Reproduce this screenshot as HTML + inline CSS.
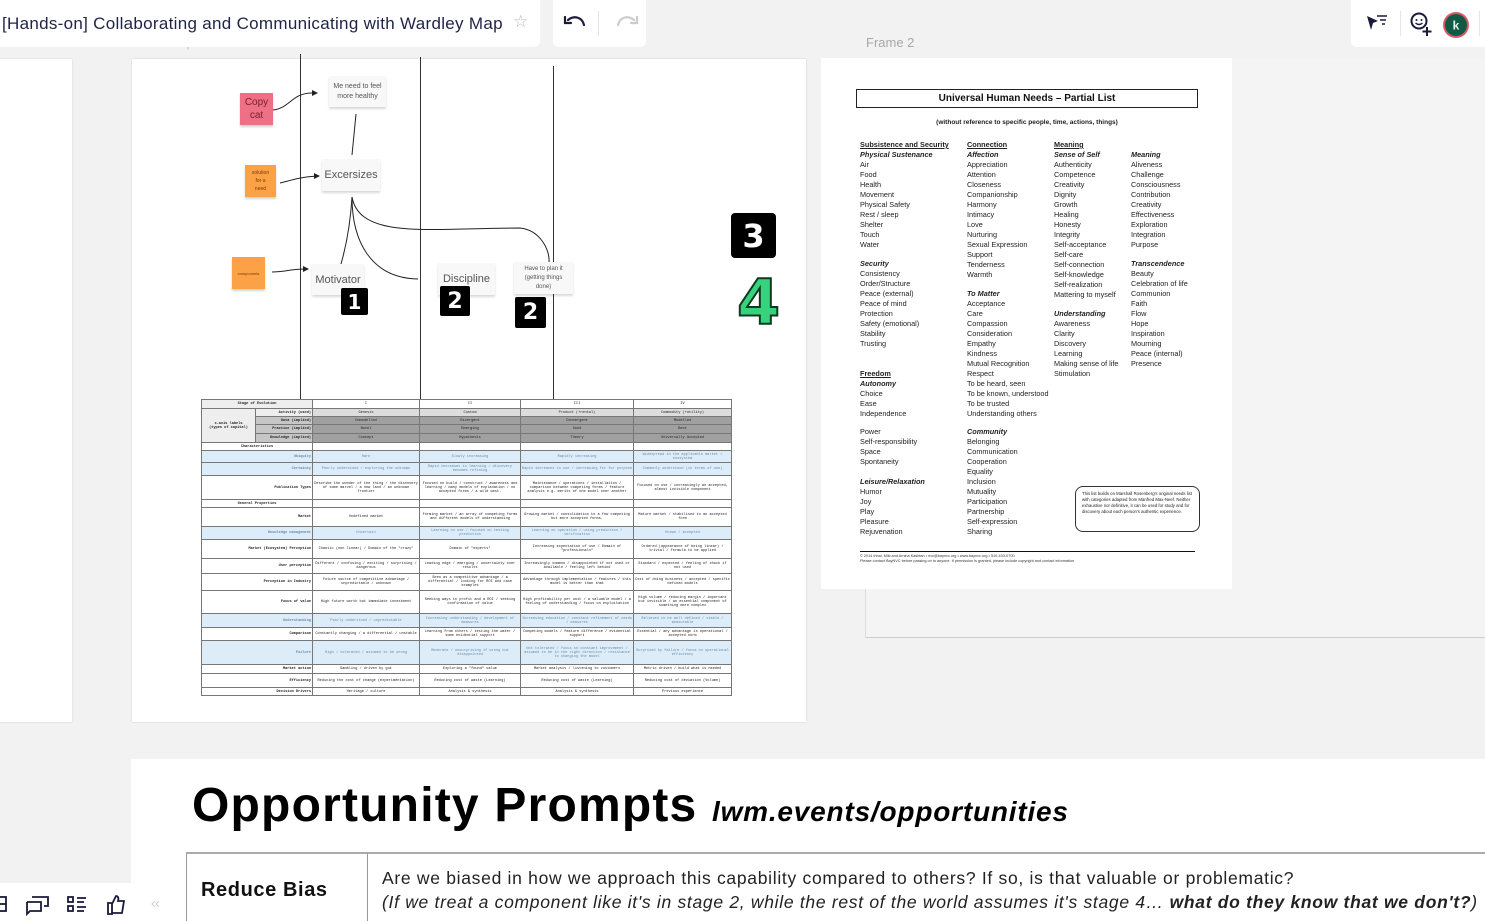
<!DOCTYPE html>
<html><head><meta charset="utf-8"><style>
*{margin:0;padding:0;box-sizing:border-box}
body{width:1485px;height:921px;overflow:hidden;background:#f2f2f2;font-family:"Liberation Sans",sans-serif;position:relative}
.abs{position:absolute}
.w{background:#fff}
.sticky{position:absolute;font-family:"Liberation Sans",sans-serif;text-align:center;display:flex;align-items:center;justify-content:center;box-shadow:0 2px 2px rgba(0,0,0,.18)}
.card{position:absolute;background:#f8f8f8;color:#555;text-align:center;display:flex;align-items:center;justify-content:center;box-shadow:0 2px 2px rgba(0,0,0,.15)}
.num{position:absolute;background:#000;color:#fff;font-weight:bold;font-family:"DejaVu Sans",sans-serif;display:flex;align-items:center;justify-content:center;border-radius:2px}
table.t{position:absolute;left:201px;top:399px;width:530px;border-collapse:collapse;font-family:"Liberation Mono",monospace;font-size:3.6px;line-height:4px;color:#222;table-layout:fixed}
table.t td{border:0.5px solid #777;text-align:center;overflow:hidden;padding:0 1px}
table.t td.r{text-align:right;font-weight:bold}
.b td{background:#dcedf9;color:#6a8aa8}
.b td.r{font-weight:normal}
.g1{background:#ddd}.g2{background:#a0a0a0}.gl{background:#eee}.gm{background:#c6c6c6}
.hn{font-size:7.3px;color:#222;line-height:10px}
.hn div{position:absolute;white-space:nowrap}
</style></head><body>

<div class="abs w" style="left:0;top:59px;width:72px;height:663px;box-shadow:0 0 2px rgba(0,0,0,.12)"></div>
<div class="abs" style="left:133px;top:38px;font-size:11px;color:#bbb">Fitness Map</div>
<div class="abs w" style="left:132px;top:59px;width:674px;height:663px;box-shadow:0 0 2px rgba(0,0,0,.15)"></div>

<div class="abs" style="left:300px;top:54px;width:1px;height:345px;background:#333"></div>
<div class="abs" style="left:420px;top:57px;width:1px;height:342px;background:#333"></div>
<div class="abs" style="left:553px;top:66px;width:1px;height:333px;background:#333"></div>

<svg class="abs" style="left:0;top:0" width="806" height="400">
<g fill="none" stroke="#222" stroke-width="1">
<path d="M273 110 C290 108 292 93 312 93"/>
<path d="M280 183 C292 180 300 177 318 176"/>
<path d="M272 272 C285 272 290 269 306 269"/>
<path d="M356 114 L352 155"/>
<path d="M352 197 C350 230 345 250 341 264"/>
<path d="M352 197 C352 240 370 278 418 279"/>
<path d="M352 197 C360 240 430 228 520 228 C540 230 550 250 549 262"/>
</g>
<g fill="#222"><path d="M312 90 L318 93 L312 96Z"/><path d="M314 173 L320 176 L314 179Z"/><path d="M303 266 L309 269 L303 272Z"/></g>
</svg>

<div class="sticky" style="left:240px;top:93px;width:33px;height:32px;background:#ef6f84;color:#7a2030;font-size:10px;line-height:13px">Copy<br>cat</div>
<div class="sticky" style="left:245px;top:165px;width:31px;height:32px;background:#fba146;color:#7a3a00;font-size:5px;line-height:8px">solution<br>for a<br>need</div>
<div class="sticky" style="left:232px;top:257px;width:33px;height:32px;background:#fba146;color:#7a3a00;font-size:4px">components</div>

<div class="card" style="left:329px;top:76px;width:57px;height:31px;font-size:7px;line-height:10px">Me need to feel<br>more healthy</div>
<div class="card" style="left:322px;top:159px;width:58px;height:32px;font-size:11px">Excersizes</div>
<div class="card" style="left:312px;top:264px;width:52px;height:31px;font-size:11px">Motivator</div>
<div class="card" style="left:438px;top:263px;width:57px;height:32px;font-size:11px">Discipline</div>
<div class="card" style="left:514px;top:262px;width:59px;height:32px;font-size:6px;line-height:9px">Have to plan it<br>(getting things<br>done)</div>

<div class="num" style="left:341px;top:288px;width:27px;height:27px;font-size:20px">1</div>
<div class="num" style="left:440px;top:286px;width:30px;height:30px;font-size:22px">2</div>
<div class="num" style="left:515px;top:297px;width:31px;height:31px;font-size:22px">2</div>
<div class="num" style="left:731px;top:213px;width:45px;height:45px;font-size:32px;border-radius:4px">3</div>
<div class="abs" style="left:737px;top:268px;font-size:62px;font-weight:bold;color:#37d27d;-webkit-text-stroke:2px #0c3a20;font-family:'DejaVu Sans',sans-serif;line-height:70px">4</div>

<table class="t">
<colgroup><col style="width:54px"><col style="width:57px"><col style="width:107px"><col style="width:101px"><col style="width:113px"><col style="width:98px"></colgroup>
<tr style="height:9px"><td colspan="2" class="gl" style="font-weight:bold">Stage of Evolution</td><td>I</td><td>II</td><td>III</td><td>IV</td></tr>
<tr style="height:8px"><td rowspan="4" class="gl" style="font-weight:bold">x-axis labels<br>(types of capital)</td><td class="r gl">Activity (used)</td><td class="g1">Genesis</td><td class="g1">Custom</td><td class="g1">Product (+rental)</td><td class="g1">Commodity (+utility)</td></tr>
<tr style="height:8px"><td class="r gm">Data (implied)</td><td class="g2">Unmodelled</td><td class="g2">Divergent</td><td class="g2">Convergent</td><td class="g2">Modelled</td></tr>
<tr style="height:9px"><td class="r gm">Practice (implied)</td><td class="g2">Novel</td><td class="g2">Emerging</td><td class="g2">Good</td><td class="g2">Best</td></tr>
<tr style="height:9px"><td class="r gm">Knowledge (implied)</td><td class="g2">Concept</td><td class="g2">Hypothesis</td><td class="g2">Theory</td><td class="g2">Universally Accepted</td></tr>
<tr style="height:8px"><td colspan="2" style="font-weight:bold">Characteristics</td><td></td><td></td><td></td><td></td></tr>
<tr class="b" style="height:12px"><td colspan="2" class="r">Ubiquity</td><td>Rare</td><td>Slowly increasing</td><td>Rapidly increasing</td><td>Widespread in the applicable market / ecosystem</td></tr>
<tr class="b" style="height:13px"><td colspan="2" class="r">Certainty</td><td>Poorly understood / exploring the unknown</td><td>Rapid increases in learning / discovery becomes refining</td><td>Rapid increases in use / increasing fit for purpose</td><td>Commonly understood (in terms of use)</td></tr>
<tr style="height:24px"><td colspan="2" class="r">Publication Types</td><td>Describe the wonder of the thing / the discovery of some marvel / a new land / an unknown frontier</td><td>Focused on build / construct / awareness and learning / many models of explanation / no accepted forms / a wild west.</td><td>Maintenance / operations / installation / comparison between competing forms / feature analysis e.g. merits of one model over another</td><td>Focused on use / increasingly an accepted, almost invisible component</td></tr>
<tr style="height:8px"><td colspan="2" style="font-weight:bold">General Properties</td><td></td><td></td><td></td><td></td></tr>
<tr style="height:19px"><td colspan="2" class="r">Market</td><td>Undefined market</td><td>Forming market / an array of competing forms and different models of understanding</td><td>Growing market / consolidation to a few competing but more accepted forms.</td><td>Mature market / stabilised to an accepted form</td></tr>
<tr class="b" style="height:13px"><td colspan="2" class="r">Knowledge management</td><td>Uncertain</td><td>Learning on use / focused on testing prediction</td><td>Learning on operation / using prediction / verification</td><td>Known / accepted</td></tr>
<tr style="height:19px"><td colspan="2" class="r">Market (Ecosystem) Perception</td><td>Chaotic (non linear) / Domain of the "crazy"</td><td>Domain of "experts"</td><td>Increasing expectation of use / Domain of "professionals"</td><td>Ordered (appearance of being linear) / trivial / formula to be applied</td></tr>
<tr style="height:15px"><td colspan="2" class="r">User perception</td><td>Different / confusing / exciting / surprising / dangerous</td><td>Leading edge / emerging / uncertainty over results</td><td>Increasingly common / disappointed if not used or available / feeling left behind</td><td>Standard / expected / feeling of shock if not used</td></tr>
<tr style="height:17px"><td colspan="2" class="r">Perception in Industry</td><td>Future source of competitive advantage / unpredictable / unknown</td><td>Seen as a competitive advantage / a differential / looking for ROI and case examples</td><td>Advantage through implementation / features / this model is better than that</td><td>Cost of doing business / accepted / specific defined models</td></tr>
<tr style="height:23px"><td colspan="2" class="r">Focus of value</td><td>High future worth but immediate investment</td><td>Seeking ways to profit and a ROI / seeking confirmation of value</td><td>High profitability per unit / a valuable model / a feeling of understanding / focus on exploitation</td><td>High volume / reducing margin / important but invisible / an essential component of something more complex</td></tr>
<tr class="b" style="height:14px"><td colspan="2" class="r">Understanding</td><td>Poorly understood / unpredictable</td><td>Increasing understanding / development of measures</td><td>Increasing education / constant refinement of needs / measures</td><td>Believed to be well defined / stable / measurable</td></tr>
<tr style="height:13px"><td colspan="2" class="r">Comparison</td><td>Constantly changing / a differential / unstable</td><td>Learning from others / testing the water / some evidential support</td><td>Competing models / feature difference / evidential support</td><td>Essential / any advantage is operational / accepted norm</td></tr>
<tr class="b" style="height:24px"><td colspan="2" class="r">Failure</td><td>High / tolerated / assumed to be wrong</td><td>Moderate / unsurprising if wrong but disappointed</td><td>Not tolerated / focus on constant improvement / assumed to be in the right direction / resistance to changing the model</td><td>Surprised by failure / focus on operational efficiency</td></tr>
<tr style="height:9px"><td colspan="2" class="r">Market action</td><td>Gambling / driven by gut</td><td>Exploring a "found" value</td><td>Market analysis / listening to customers</td><td>Metric driven / build what is needed</td></tr>
<tr style="height:14px"><td colspan="2" class="r">Efficiency</td><td>Reducing the cost of change (experimentation)</td><td>Reducing cost of waste (Learning)</td><td>Reducing cost of waste (Learning)</td><td>Reducing cost of deviation (Volume)</td></tr>
<tr style="height:8px"><td colspan="2" class="r">Decision Drivers</td><td>Heritage / culture</td><td>Analysis &amp; synthesis</td><td>Analysis &amp; synthesis</td><td>Previous experience</td></tr>
</table>

<div class="abs" style="left:866px;top:35px;font-size:13px;color:#a8a8a8">Frame 2</div>
<div class="abs" style="left:865px;top:58px;width:620px;height:580px;background:#f4f4f4;border-left:1px solid #ddd;border-bottom:1px solid #ccc"></div>
<div class="abs w" style="left:821px;top:58px;width:411px;height:531px"></div>
<div class="abs" style="left:856px;top:89px;width:342px;height:19px;border:1px solid #222;text-align:center;font-size:10px;font-weight:bold;line-height:17px;color:#111">Universal Human Needs – Partial List</div>
<div class="abs" style="left:856px;top:119px;width:342px;text-align:center;font-size:6.5px;font-weight:bold;color:#222">(without reference to specific people, time, actions, things)</div>
<div class="hn">
<div style="left:860px;top:140px;font-weight:bold;text-decoration:underline">Subsistence and Security</div>
<div style="left:860px;top:150px;font-weight:bold;font-style:italic">Physical Sustenance</div>
<div style="left:860px;top:160px">Air<br>Food<br>Health<br>Movement<br>Physical Safety<br>Rest / sleep<br>Shelter<br>Touch<br>Water</div>
<div style="left:860px;top:259px;font-weight:bold;font-style:italic">Security</div>
<div style="left:860px;top:269px">Consistency<br>Order/Structure<br>Peace (external)<br>Peace of mind<br>Protection<br>Safety (emotional)<br>Stability<br>Trusting</div>
<div style="left:860px;top:369px;font-weight:bold;text-decoration:underline">Freedom</div>
<div style="left:860px;top:379px;font-weight:bold;font-style:italic">Autonomy</div>
<div style="left:860px;top:389px">Choice<br>Ease<br>Independence</div>
<div style="left:860px;top:427px">Power<br>Self-responsibility<br>Space<br>Spontaneity</div>
<div style="left:860px;top:477px;font-weight:bold;font-style:italic">Leisure/Relaxation</div>
<div style="left:860px;top:487px">Humor<br>Joy<br>Play<br>Pleasure<br>Rejuvenation</div>

<div style="left:967px;top:140px;font-weight:bold;text-decoration:underline">Connection</div>
<div style="left:967px;top:150px;font-weight:bold;font-style:italic">Affection</div>
<div style="left:967px;top:160px">Appreciation<br>Attention<br>Closeness<br>Companionship<br>Harmony<br>Intimacy<br>Love<br>Nurturing<br>Sexual Expression<br>Support<br>Tenderness<br>Warmth</div>
<div style="left:967px;top:289px;font-weight:bold;font-style:italic">To Matter</div>
<div style="left:967px;top:299px">Acceptance<br>Care<br>Compassion<br>Consideration<br>Empathy<br>Kindness<br>Mutual Recognition<br>Respect<br>To be heard, seen<br>To be known, understood<br>To be trusted<br>Understanding others</div>
<div style="left:967px;top:427px;font-weight:bold;font-style:italic">Community</div>
<div style="left:967px;top:437px">Belonging<br>Communication<br>Cooperation<br>Equality<br>Inclusion<br>Mutuality<br>Participation<br>Partnership<br>Self-expression<br>Sharing</div>

<div style="left:1054px;top:140px;font-weight:bold;text-decoration:underline">Meaning</div>
<div style="left:1054px;top:150px;font-weight:bold;font-style:italic">Sense of Self</div>
<div style="left:1054px;top:160px">Authenticity<br>Competence<br>Creativity<br>Dignity<br>Growth<br>Healing<br>Honesty<br>Integrity<br>Self-acceptance<br>Self-care<br>Self-connection<br>Self-knowledge<br>Self-realization<br>Mattering to myself</div>
<div style="left:1054px;top:309px;font-weight:bold;font-style:italic">Understanding</div>
<div style="left:1054px;top:319px">Awareness<br>Clarity<br>Discovery<br>Learning<br>Making sense of life<br>Stimulation</div>

<div style="left:1131px;top:150px;font-weight:bold;font-style:italic">Meaning</div>
<div style="left:1131px;top:160px">Aliveness<br>Challenge<br>Consciousness<br>Contribution<br>Creativity<br>Effectiveness<br>Exploration<br>Integration<br>Purpose</div>
<div style="left:1131px;top:259px;font-weight:bold;font-style:italic">Transcendence</div>
<div style="left:1131px;top:269px">Beauty<br>Celebration of life<br>Communion<br>Faith<br>Flow<br>Hope<br>Inspiration<br>Mourning<br>Peace (internal)<br>Presence</div>
</div>
<div class="abs" style="left:1075px;top:486px;width:125px;height:46px;border:1px solid #333;border-radius:8px;font-size:4.3px;line-height:6px;padding:4px 6px;color:#222">This list builds on Marshall Rosenberg's original needs list with categories adapted from Manfred Max-Neef. Neither exhaustive nor definitive, it can be used for study and for discovery about each person's authentic experience.</div>
<div class="abs" style="left:860px;top:551px;width:335px;height:1px;background:#111"></div>
<div class="abs" style="left:860px;top:554px;font-size:3.8px;line-height:5px;color:#333;white-space:nowrap">© 2014 Inbal, Miki and Arnina Kashtan • nvc@baynvc.org • www.baynvc.org • 510-433-0700<br>Please contact BayNVC before passing on to anyone. If permission is granted, please include copyright and contact information</div>

<div class="abs w" style="left:131px;top:759px;width:1354px;height:162px"></div>
<div class="abs" style="left:192px;top:778px;font-size:48px;font-weight:bold;color:#000;letter-spacing:1.2px;white-space:nowrap">Opportunity Prompts <span style="font-size:28px;font-style:italic;letter-spacing:0.8px">lwm.events/opportunities</span></div>
<div class="abs" style="left:186px;top:852px;width:1299px;height:69px;border-top:2px solid #aaa;border-left:1px solid #999"></div>
<div class="abs" style="left:367px;top:853px;width:1px;height:68px;background:#999"></div>
<div class="abs" style="left:201px;top:879px;font-size:20px;font-weight:bold;color:#111;letter-spacing:0.6px">Reduce Bias</div>
<div class="abs" style="left:382px;top:866px;font-size:17.5px;color:#222;line-height:24px;white-space:nowrap;letter-spacing:0.7px">Are we biased in how we approach this capability compared to others? If so, is that valuable or problematic?<br><i>(If we treat a component like it's in stage 2, while the rest of the world assumes it's stage 4…  <b>what do they know that we don't?</b>)</i></div>

<div class="abs w" style="left:0;top:883px;width:131px;height:38px"></div>
<svg class="abs" style="left:0;top:893px" width="170" height="26" fill="none" stroke="#1a1a3a" stroke-width="1.8">
<rect x="-4" y="4" width="10" height="14"/><path d="M-4 11 H6"/>
<path d="M27 9 h14 v9 h-6 M32 4 h16 v9 h-4 M27 9 v12 l3 -3 h5"/>
<rect x="68" y="4" width="5" height="5"/><rect x="68" y="13" width="5" height="5"/><path d="M77 5 h9 M77 9 h7 M77 14 h9 M77 18 h7"/>
<path d="M108 10 v11 h4 v-11 z M112 11 l4 -8 c2 0 3 2 2 5 h6 l-2 12 h-10"/>
<path d="M155 8 l-3 3 l3 3 M159 8 l-3 3 l3 3" stroke="#ccc" stroke-width="1"/>
</svg>

<div class="abs w" style="left:0;top:0;width:540px;height:47px;border-radius:0 0 6px 0"></div>
<div class="abs" style="left:2px;top:14px;font-size:17px;color:#1f2347;white-space:nowrap;letter-spacing:0.3px">[Hands-on] Collaborating and Communicating with Wardley Map</div>
<div class="abs" style="left:513px;top:12px;font-size:17px;color:#bbb">☆</div>
<div class="abs w" style="left:553px;top:0;width:93px;height:47px;border-radius:0 0 6px 6px"></div>
<div class="abs" style="left:598px;top:11px;width:1px;height:25px;background:#e5e5e5"></div>
<svg class="abs" style="left:560px;top:12px" width="80" height="24" fill="none" stroke-width="2.2" stroke-linecap="round">
<path d="M8 8 C14 3 22 5 24 13" stroke="#1a1a3a"/><path d="M5 5 v6 h6" stroke="#1a1a3a"/>
<path d="M74 8 C68 3 60 5 58 13" stroke="#ccc"/><path d="M77 5 v6 h-6" stroke="#ccc"/>
</svg>
<div class="abs w" style="left:1351px;top:0;width:134px;height:47px;border-radius:0 0 0 6px"></div>
<div class="abs" style="left:1400px;top:11px;width:1px;height:25px;background:#e5e5e5"></div>
<svg class="abs" style="left:1360px;top:8px" width="125" height="32" fill="none">
<path d="M7 8 L18 13 L13 15 L11 22 Z" fill="#1a1a3a"/><path d="M17 8 h10 M20 12 h6 M22 16 h3" stroke="#1a1a3a" stroke-width="1.6"/>
<circle cx="59" cy="13" r="7.5" stroke="#1a1a3a" stroke-width="2"/><circle cx="56.5" cy="12" r="1" fill="#1a1a3a"/><circle cx="61.5" cy="12" r="1" fill="#1a1a3a"/><path d="M55.5 15 q3.5 3 7 0" stroke="#1a1a3a" stroke-width="1.4"/>
<path d="M67 19 v9 M62.5 23.5 h9" stroke="#fff" stroke-width="4"/><path d="M67 19 v9 M62.5 23.5 h9" stroke="#1a1a3a" stroke-width="2"/>
<circle cx="96" cy="17" r="13" fill="#d75a64"/><circle cx="96" cy="17" r="11" fill="#0f5a45"/>
<text x="96" y="21.5" fill="#e8f0ea" font-size="12" font-weight="bold" text-anchor="middle" font-family="Liberation Sans">k</text>
</svg>
<div class="abs" style="left:1479px;top:11px;width:1px;height:25px;background:#e5e5e5"></div>
</body></html>
